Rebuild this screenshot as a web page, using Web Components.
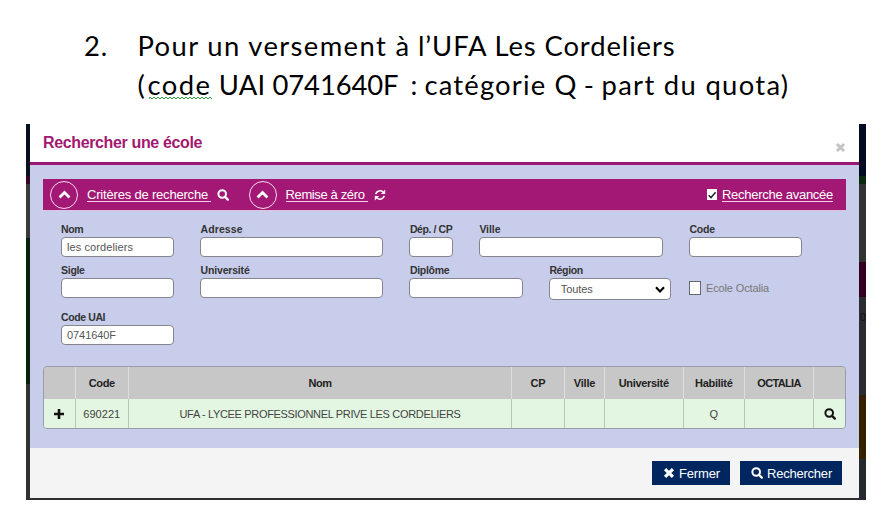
<!DOCTYPE html>
<html lang="fr">
<head>
<meta charset="utf-8">
<title>Rechercher une école</title>
<style>
body{margin:0;background:#fff;width:888px;height:518px;overflow:hidden;font-family:"Liberation Sans",Arial,sans-serif}
</style>
</head>
<body>
<school-page></school-page>
<script>
const sheet = (host, html) => { host.attachShadow({mode:'open'}).innerHTML = html; };

/* Text line spread over a fixed width by letter spacing. */
class FitText extends HTMLElement {
  connectedCallback() {
    if (this.shadowRoot) return;
    sheet(this, `<style>:host{display:block;white-space:pre;flex:none}span{display:inline-block;text-decoration:inherit}</style><span><slot></slot></span>`);
    const w = +this.getAttribute('w');
    const span = this.shadowRoot.querySelector('span');
    this.style.width = w + 'px';
    const n = this.textContent.length;
    this.style.letterSpacing = ((w - span.getBoundingClientRect().width) / n) + 'px';
  }
}

const ICONS = {
  search: '<circle cx="5.2" cy="5" r="3.8" fill="none" stroke="currentColor" stroke-width="2"/><path d="M8 7.8l2.8 2.8" stroke="currentColor" stroke-width="2.3" stroke-linecap="round"/>',
  up: '<path d="M1.4 8.8L6 4.1l4.6 4.7" fill="none" stroke="currentColor" stroke-width="2.5"/>',
  down: '<path d="M2 4.2l4 4.2 4-4.2" fill="none" stroke="currentColor" stroke-width="2.1"/>',
  times: '<path d="M2.1 2.1l7.8 7.8M9.9 2.1L2.1 9.9" stroke="currentColor" stroke-width="3.2"/>',
  plus: '<path d="M6 1v10M1 6h10" stroke="currentColor" stroke-width="2.6"/>',
  check: '<path d="M2 6.2l2.8 2.9L10.3 2.8" fill="none" stroke="currentColor" stroke-width="1.7"/>',
  refresh: '<path d="M1.7 5.1A4.4 4.4 0 0 1 9 3M10.3 6.9A4.4 4.4 0 0 1 3 9" fill="none" stroke="currentColor" stroke-width="1.7"/><path d="M11.2.6v4.3H6.9zM.8 11.4V7.1h4.3z" fill="currentColor"/>'
};
class UiIcon extends HTMLElement {
  connectedCallback() {
    if (this.shadowRoot) return;
    const s = this.getAttribute('size') || 12;
    sheet(this, `<style>:host{display:block;flex:none;width:${s}px;height:${s}px}svg{display:block}</style><svg width="${s}" height="${s}" viewBox="0 0 12 12">${ICONS[this.getAttribute('name')]}</svg>`);
  }
}

class SlideHeading extends HTMLElement {
  connectedCallback() {
    sheet(this, `<style>
    :host{display:grid;grid-template-columns:53.5px 1fr;grid-auto-rows:39px;padding-left:84px;height:98px;box-sizing:border-box;font:27.4px/39px Lato,"Open Sans",sans-serif;color:#000}
    .l{display:flex}.w{position:relative}
    svg{position:absolute;left:1px;top:31px}
    </style>
    <fit-text w="24">2.</fit-text><div class="l"><fit-text w="258">Pour un versement </fit-text><fit-text w="149">à l’UFA Les </fit-text><fit-text w="131">Cordeliers</fit-text></div>
    <span></span><div class="l"><fit-text w="10">(</fit-text><div class="w"><fit-text w="64">code</fit-text><svg width="64" height="4" viewBox="0 0 64 4"><path d="M0 3${Array.from({length:32},(_,i)=>`L${i*2+1} ${i%2?3:1}`).join('')}" fill="none" stroke="#2f9a3b"/></svg></div><fit-text w="61"> UAI </fit-text><fit-text w="126">0741640F</fit-text><fit-text w="12">  </fit-text><fit-text w="14">: </fit-text><fit-text w="130">catégorie </fit-text><fit-text w="47">Q - </fit-text><fit-text w="188">part du quota)</fit-text></div>`);
  }
}

class CircleLink extends HTMLElement {
  connectedCallback() {
    const a = n => this.getAttribute(n);
    sheet(this, `<style>
    :host{display:flex;align-items:center;color:#fff;font-size:13px;line-height:16px}
    .c{box-sizing:border-box;width:28px;height:28px;border:1.6px solid #f6dcef;border-radius:50%;display:grid;place-items:center;margin-right:9px}
    .u{border-bottom:1px solid #f3cfe8;height:14px;line-height:15px;margin-right:6px}
    </style><span class="c"><ui-icon name="up" size="13"></ui-icon></span><div class="u" style="width:${a('u')}px"><fit-text w="${a('w')}">${a('label')}</fit-text></div><ui-icon name="${a('icon')}" size="12"></ui-icon>`);
  }
}

class FormField extends HTMLElement {
  connectedCallback() {
    const a = n => this.getAttribute(n);
    const sel = this.hasAttribute('select');
    sheet(this, `<style>
    :host{display:block;color:#333}
    .l{font-weight:bold;font-size:10.5px;line-height:14px;height:15px;margin-left:.6px}
    .b{box-sizing:border-box;height:${sel?21.5:20}px;border:1px solid #85858d;border-radius:4px;background:#fff;display:flex;align-items:center;justify-content:space-between;font-size:11px;color:#555;padding:${sel?'0 4px 0 11px':'0 5.5px'}}
    ui-icon{color:#000}
    </style><fit-text class="l" w="${a('lw')}">${a('label')}</fit-text><div class="b">${a('value')?`<fit-text w="${a('vw')}">${a('value')}</fit-text>`:''}${sel?'<ui-icon name="down" size="12"></ui-icon>':''}</div>`);
  }
}

class SearchForm extends HTMLElement {
  connectedCallback() {
    sheet(this, `<style>
    :host{display:block;padding:11px 0 0 17.5px}
    .r{display:grid;column-gap:26px;height:41px}
    .r1{grid-template-columns:113.5px 183.3px 43.5px 184px 113.5px}
    .r2{grid-template-columns:113.5px 183.3px 113.5px 122px 120px;height:47px}
    .r3{grid-template-columns:113.5px}
    .k{display:flex;align-items:flex-start;padding-top:18px;margin-left:-7.8px;gap:5px;font-size:11px;line-height:14px;color:#777}
    .k i{box-sizing:border-box;width:12px;height:14px;border:1px solid #666;background:#fff}
    </style>
    <div class="r r1"><form-field label="Nom" lw="22" value="les cordeliers" vw="66"></form-field><form-field label="Adresse" lw="42"></form-field><form-field label="Dép. / CP" lw="42.5"></form-field><form-field label="Ville" lw="21"></form-field><form-field label="Code" lw="25.5"></form-field></div>
    <div class="r r2"><form-field label="Sigle" lw="23.5"></form-field><form-field label="Université" lw="49"></form-field><form-field label="Diplôme" lw="39.5"></form-field><form-field select label="Région" lw="33.5" value="Toutes" vw="32"></form-field><div class="k"><i></i><fit-text w="63">Ecole Octalia</fit-text></div></div>
    <div class="r r3"><form-field label="Code UAI" lw="44" value="0741640F" vw="49"></form-field></div>`);
  }
}

class ResultTable extends HTMLElement {
  connectedCallback() {
    const heads = [['',0],['Code',26],['Nom',23],['CP',15],['Ville',21.5],['Université',50],['Habilité',37.5],['OCTALIA',43.5],['',0]];
    const cells = ['<ui-icon name="plus" size="12"></ui-icon>','<fit-text w="37">690221</fit-text>','<fit-text w="281">UFA - LYCEE PROFESSIONNEL PRIVE LES CORDELIERS</fit-text>','','','','Q','','<ui-icon name="search" size="12"></ui-icon>'];
    sheet(this, `<style>
    :host{display:block;box-sizing:border-box;width:803px;height:63px;border:1px solid #999ba8;border-radius:4px;overflow:hidden}
    .g{display:grid;grid-template-columns:31.5px 53.5px 383px 53px 40px 78.5px 61.5px 69px 1fr}
    .g>div{display:grid;place-items:center;box-sizing:border-box;border-right:1px solid #b9c6b7}
    .g>div:last-child{border:0}
    .h{height:32px;background:#c7c7c7;color:#222;font-weight:bold;font-size:11px}
    .h>div{border-color:#dedede}
    .b{height:29px;background:#e3f6e1;color:#444;font-size:11px}
    ui-icon{color:#111}
    </style><div class="g h">${heads.map(([t,w])=>`<div>${t?`<fit-text w="${w}">${t}</fit-text>`:''}</div>`).join('')}</div><div class="g b">${cells.map(c=>`<div>${c}</div>`).join('')}</div>`);
  }
}

class ActionButton extends HTMLElement {
  connectedCallback() {
    const a = n => this.getAttribute(n);
    sheet(this, `<style>:host{display:flex;box-sizing:border-box;align-items:center;height:24px;background:#00265f;color:#fff;font-size:13px;padding-left:11px;gap:4px}</style><ui-icon name="${a('icon')}" size="12"></ui-icon><fit-text w="${a('w')}">${a('label')}</fit-text>`);
  }
}

class SearchDialog extends HTMLElement {
  connectedCallback() {
    sheet(this, `<style>
    :host{display:flex;flex-direction:column;width:829px;height:374px;background:#c7cdea}
    header{box-sizing:border-box;height:41px;background:#fff;border-bottom:3px solid #9c1673;display:flex;justify-content:space-between;padding:9px 13px 0 13px;color:#a3186f;font-weight:bold;font-size:16px;line-height:20px}
    header ui-icon{color:#c4c4c4;margin-top:9px}
    main{height:283px;box-sizing:border-box;padding:14px 13px 0;display:flex;flex-direction:column}
    .bar{display:flex;align-items:center;box-sizing:border-box;height:32px;background:#a41875;border-bottom:1px solid #ddc3e0;padding:0 13px 0 7px;color:#fff;font-size:13px}
    circle-link+circle-link{margin-left:19.5px}
    .adv{margin-left:auto;display:flex;align-items:center;gap:5px}
    .adv i{box-sizing:border-box;width:10.5px;height:11px;background:#fff;color:#222;display:grid;place-items:center}
    .adv div{border-bottom:1px solid #f3cfe8;height:14px;line-height:15px}
    search-form{height:155px;box-sizing:border-box}
    footer{height:50px;background:#f4f4f4;box-sizing:border-box;padding:13px 17px 0 0;display:flex;justify-content:flex-end;align-items:flex-start;gap:10px}
    </style>
    <header><fit-text w="159">Rechercher une école</fit-text><ui-icon name="times" size="11"></ui-icon></header>
    <main><div class="bar"><circle-link label="Critères de recherche" w="121" u="124" icon="search"></circle-link><circle-link label="Remise à zéro" w="79" u="82" icon="refresh"></circle-link><div class="adv"><i><ui-icon name="check" size="10"></ui-icon></i><div><fit-text w="111">Recherche avancée</fit-text></div></div></div>
    <search-form></search-form><result-table></result-table></main>
    <footer><action-button style="width:78px" icon="times" label="Fermer" w="41"></action-button><action-button style="width:102px" icon="search" label="Rechercher" w="65"></action-button></footer>`);
  }
}

class SchoolPage extends HTMLElement {
  connectedCallback() {
    sheet(this, `<style>
    :host{display:block;padding-top:26px;height:518px;box-sizing:border-box}
    .d{position:relative;box-sizing:border-box;width:840px;height:376px;margin-left:26px;padding-left:4px;
      background:
      linear-gradient(#000b20 0 40px,#000c24 52px,#0a2a0c 52px 60px,#303234 60px 138px,#34001f 138px 173px,#2b2c33 173px 271px,#352100 271px 335px,#262930 335px) right/8px 100% no-repeat,
      linear-gradient(#07101d 0 52px,#330820 52px 60px,#393b3b 60px 114px,#06220f 114px 260px,#303230 260px)}
    .z{position:absolute;right:0;top:186px;width:6px;overflow:hidden;font-size:11px;line-height:14px;color:#111}
    </style><slide-heading></slide-heading><div class="d"><search-dialog></search-dialog><span class="z">0</span></div>`);
  }
}
customElements.define('fit-text', FitText);
customElements.define('ui-icon', UiIcon);
customElements.define('slide-heading', SlideHeading);
customElements.define('circle-link', CircleLink);
customElements.define('form-field', FormField);
customElements.define('search-form', SearchForm);
customElements.define('result-table', ResultTable);
customElements.define('action-button', ActionButton);
customElements.define('search-dialog', SearchDialog);
customElements.define('school-page', SchoolPage);
</script>
</body>
</html>
